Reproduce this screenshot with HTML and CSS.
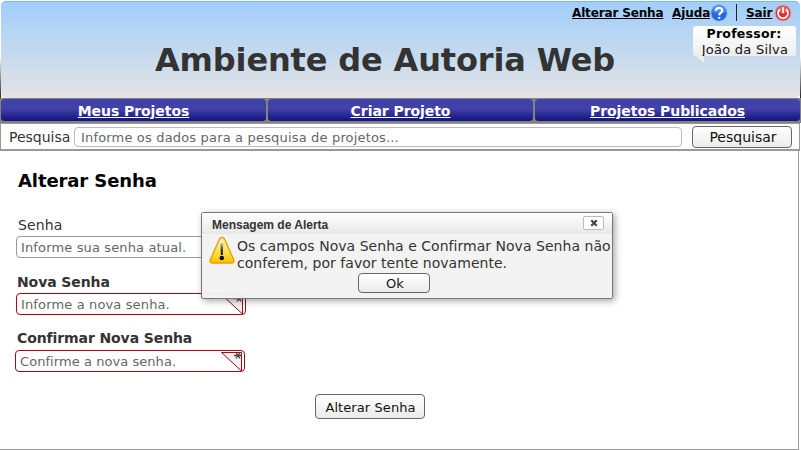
FILE: index.html
```
<!DOCTYPE html>
<html lang="pt-BR">
<head>
<meta charset="utf-8">
<title>Ambiente de Autoria Web</title>
<link rel="stylesheet" href="styles.css">
</head>
<body>
<header class="banner">
  <div class="links">
    <a class="l-senha">Alterar Senha</a>
    <a class="l-ajuda">Ajuda</a>
    <svg class="ic" width="18" height="18" viewBox="0 0 18 18"><circle cx="9" cy="9" r="8.2" fill="#2468dc" stroke="#8db8ee"/><path d="M2 8a7 7 0 0 1 14 0Q9 10 2 8z" fill="#609bf0" opacity=".65"/><path d="M5.8 6.8C6 3 12.3 3 12.3 6.5C12.3 9 9.2 8.7 9.2 11.3M9.2 13v1.8" fill="none" stroke="#fff" stroke-width="2.2"/></svg>
    <span class="sep"></span>
    <a class="l-sair">Sair</a>
    <svg class="ic" width="18" height="18" viewBox="0 0 18 18"><circle cx="9" cy="9" r="8" fill="#df3035" stroke="#eba0a5"/><path d="M2.5 8a6.5 6.5 0 0 1 13 0Q9 10 2.5 8z" fill="#f1777a" opacity=".6"/><path d="M6 5.3a5 5 0 1 0 6 0M9 3.2v6" fill="none" stroke="#fff" stroke-width="1.8"/></svg>
  </div>
  <div class="user"><b>Professor:</b><span>João da Silva</span></div>
  <h1>Ambiente de Autoria Web</h1>
</header>
<nav class="menu">
  <div><a class="m1">Meus Projetos</a></div>
  <div><a class="m2">Criar Projeto</a></div>
  <div><a class="m3">Projetos Publicados</a></div>
</nav>
<div class="search">
  <label>Pesquisa</label>
  <div class="field"><span>Informe os dados para a pesquisa de projetos...</span></div>
  <button><span class="t-pesq">Pesquisar</span></button>
</div>
<main>
  <h2><span>Alterar Senha</span></h2>
  <div class="lab lab1"><span>Senha</span></div>
  <div class="inp plain"><span class="p1">Informe sua senha atual.</span></div>
  <div class="lab lab2"><span>Nova Senha</span></div>
  <div class="inp req"><span class="p2">Informe a nova senha.</span>
    <svg class="corner" width="24" height="20" viewBox="0 0 24 20"><path d="M0.5 1.5H20.5V20z" fill="#f2f0f0" stroke="#a50b12"/><path d="M13 4.5h8M15 1.5l4 6M19 1.5l-4 6" stroke="#444" stroke-width="1.3"/></svg></div>
  <div class="lab lab3"><span>Confirmar Nova Senha</span></div>
  <div class="inp req last"><span class="p3">Confirme a nova senha.</span>
    <svg class="corner" width="24" height="20" viewBox="0 0 24 20"><path d="M0.5 1.5H20.5V20z" fill="#f2f0f0" stroke="#a50b12"/><path d="M13 4.5h8M15 1.5l4 6M19 1.5l-4 6" stroke="#444" stroke-width="1.3"/></svg></div>
  <button class="submit"><span class="t-sub">Alterar Senha</span></button>
</main>
<div class="dialog" role="dialog">
  <div class="dtitle"><span class="t-dlg">Mensagem de Alerta</span><div class="close"><svg width="8" height="8" viewBox="0 0 8 8"><path d="M1.3 1.3l5.4 5.4M6.7 1.3L1.3 6.7" stroke="#444" stroke-width="2.2"/></svg></div></div>
  <div class="dbody">
    <svg width="26" height="28" viewBox="0 0 26 28"><defs><linearGradient id="w" x1="0" y1="0" x2="0" y2="1"><stop offset="0" stop-color="#fff3c0"/><stop offset=".5" stop-color="#ffe458"/><stop offset="1" stop-color="#ffc000"/></linearGradient><linearGradient id="k" x1="0" y1="0" x2="0" y2="1"><stop offset="0" stop-color="#ccc"/><stop offset=".6" stop-color="#333"/><stop offset="1" stop-color="#000"/></linearGradient></defs><path d="M13 1.5Q15 1.5 16 4L24.8 24Q25.5 27 23 27H3Q.5 27 1.2 24L10 4Q11 1.5 13 1.5z" fill="url(#w)" stroke="#eca000" stroke-width="1.4"/><path d="M11.3 7h3l-.6 12h-1.8z" fill="url(#k)"/><circle cx="12.8" cy="22" r="2.3" fill="#111"/></svg>
    <p><span class="d1">Os campos Nova Senha e Confirmar Nova Senha não</span><br><span class="d2">conferem, por favor tente novamente.</span></p>
  </div>
  <button class="ok"><span class="t-ok">Ok</span></button>
</div>
</body>
</html>
```
FILE: styles.css
```
* { box-sizing: border-box; }
body { margin: 0; width: 801px; height: 450px; overflow: hidden; background: #fff; position: relative; font-family: "DejaVu Sans", Verdana, sans-serif; color: #333; white-space: nowrap; }
svg { display: block; flex: none; }
h1, h2, p { margin: 0; }
a { text-decoration: underline; }
button { font-family: inherit; padding: 0; margin: 0; border: 1px solid #666; border-radius: 4px; background: linear-gradient(#fff, #ebebeb); color: #111; display: flex; align-items: center; justify-content: center; }
.banner { margin: 1px 0 0 1px; width: 799px; height: 97px; border-radius: 5px; border-top: 1px solid #70bde8; background: linear-gradient(#a1cefb, #e3e3e3); position: relative; }
.banner::before { content: ""; position: absolute; inset: 55px -1px 0 -1px; border: solid #444; border-width: 0 1px; border-radius: 0 0 5px 5px; border-image: linear-gradient(transparent, #222) 1; }
.links { height: 21px; display: flex; align-items: center; padding-left: 571px; font-size: 12px; font-weight: bold; color: #000; }
.l-senha { width: 100px; letter-spacing: -.15px; }
.l-ajuda { width: 38px; letter-spacing: -.1px; }
.l-sair { width: 28px; letter-spacing: -.1px; }
.sep { width: 1px; height: 17px; background: #222; margin: 0 9px 0 8px; }
.user { position: absolute; left: 692px; top: 24px; width: 103px; height: 30px; border-radius: 3px; background: linear-gradient(#fff, #eee); display: flex; flex-direction: column; align-items: center; font-size: 13px; line-height: 15.5px; color: #111; letter-spacing: .25px; }
.user b { font-size: 12.5px; color: #000; margin-left: -1px; }
.user > span { margin-left: 1px; }
.user::after { content: ""; position: absolute; left: 3px; top: 30px; border-top: 7px solid #eee; border-left: 8px solid transparent; }
h1 { font-size: 32px; line-height: 40px; padding: 17px 0 0 154px; letter-spacing: -.15px; }
.menu { display: grid; grid-template-columns: 267px 267px 267px; height: 25px; background: #83837d; }
.menu div { display: flex; justify-content: center; align-items: center; border: 1px solid #83837d; border-bottom-width: 2px; border-radius: 5px; background: linear-gradient(#4141a9 45%, #12127f); color: #fff; font-weight: bold; font-size: 14px; padding-top: 2px; letter-spacing: -.06px; }
.search { height: 28px; border: 1px solid #999; border-bottom-width: 2px; border-right-width: 1px; width: 800px; display: flex; align-items: center; padding-left: 8px; font-size: 14px; }
.search label { width: 65px; }
.field { width: 608px; height: 20px; border: 1px solid #bbb; border-radius: 4px; padding: 2px 0 0 6px; display: flex; align-items: center; color: #666; font-size: 13px; letter-spacing: .17px; }
.search button { width: 100px; height: 22px; margin-left: 10px; font-size: 14px; padding-left: 2px; }
main { width: 799px; height: 299px; border: solid #999; border-width: 0 1px 1px 0; padding-left: 16px; }
h2 { font-size: 18px; line-height: 22px; color: #000; padding: 19px 0 0 2px; letter-spacing: -.1px; }
.lab { font-size: 14px; line-height: 18px; font-weight: bold; padding-left: 1px; letter-spacing: -.1px; }
.lab1 { font-weight: normal; margin-top: 24px; padding-left: 2px; letter-spacing: .1px; }
.lab2 { margin-top: 15px; }
.lab3 { margin-top: 14px; }
.inp { width: 230px; height: 22px; margin-top: 2px; border: 1px solid #999; border-radius: 4px; padding-left: 4px; display: flex; align-items: center; font-size: 13px; color: #666; position: relative; letter-spacing: .14px; }
.inp.last { letter-spacing: .06px; }
.req { border-color: #a50b12; }
.last { margin: 3px 0 0 -1px; }
.corner { position: absolute; right: -1px; top: 0; }
.submit { width: 110px; height: 25px; margin: 22px 0 0 299px; font-size: 13px; letter-spacing: .08px; padding: 1px 0 0 1px; }
.dialog { position: absolute; left: 201px; top: 212px; width: 412px; height: 87px; border: 1px solid #777; border-radius: 2px; background: rgba(243,243,243,.96); box-shadow: 2px 2px 7px rgba(0,0,0,.35); }
.dtitle { height: 21px; display: flex; align-items: center; justify-content: space-between; padding: 3px 8px 0 10px; background: linear-gradient(#fff, #e8e8e8); font: bold 12px "Liberation Sans", Arial, sans-serif; }
.close { width: 21px; height: 14px; border: 1px solid #bbb; border-radius: 2px; background: #fff; display: flex; align-items: center; justify-content: center; margin-top: -4px; }
.dbody { display: flex; padding: 2px 0 0 7px; height: 39px; }
.dbody p { font-size: 14px; line-height: 17px; padding: 2px 0 0 2px; letter-spacing: .03px; }
.ok { width: 72px; height: 20px; margin-left: 156px; font-size: 13px; padding-left: 2px; }
```
